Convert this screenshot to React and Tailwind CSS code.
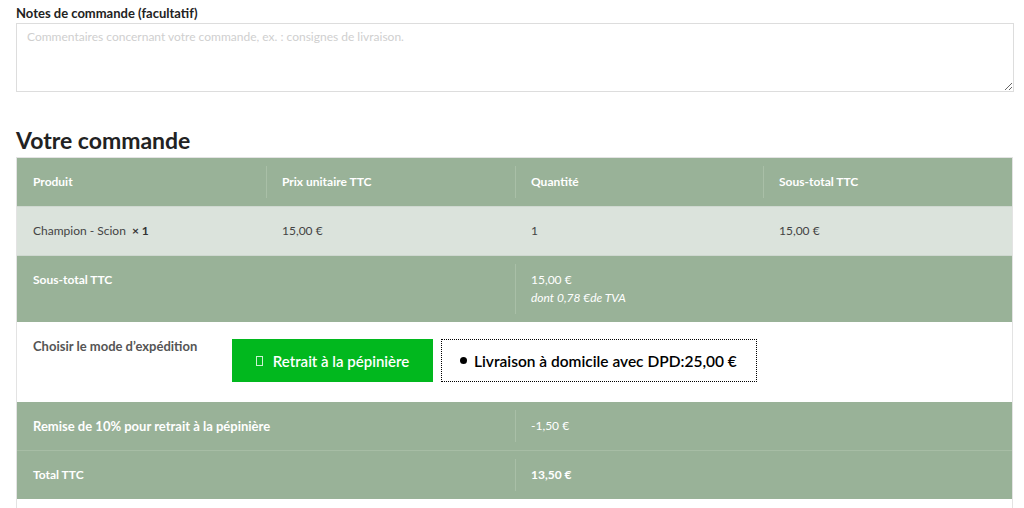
import React from 'react';

const font = { fontFamily: 'Lato, "Noto Sans", sans-serif' };

function Divided({ children, className = '' }) {
  // faint inset divider on the left of a cell
  return (
    <div className={`my-[8px] border-l border-[#a9bfa7] pl-[15px] py-[7px] ${className}`}>
      {children}
    </div>
  );
}

export default function App() {
  return (
    <div className="min-h-screen bg-white px-4 pt-[5px] text-[#333]" style={font}>
      {/* Notes */}
      <label className="block text-[13px] leading-[16px] font-bold text-[#222] mb-[2px]">
        Notes de commande (facultatif)
      </label>
      <textarea
        className="block w-[998px] h-[69px] border border-[#dddddd] px-[10px] py-[4px] text-[12px] leading-[18px] placeholder-[#cfcfcf] outline-none"
        placeholder="Commentaires concernant votre commande, ex. : consignes de livraison."
      />

      <h3 className="mt-[34px] mb-[3px] text-[23px] leading-[28px] font-bold text-[#222]">Votre commande</h3>

      <div className="w-[997px] border-x border-t border-[#e3e3e3] pb-[12px]">
        <table className="w-full border-collapse text-[12px] leading-[18px] table-fixed">
          <thead>
            <tr className="bg-[#99b298] text-white font-bold">
              <th className="w-[249px] text-left font-bold px-4 py-[15px]">Produit</th>
              <th className="w-[249px] text-left font-bold p-0">
                <Divided>Prix unitaire TTC</Divided>
              </th>
              <th className="w-[248px] text-left font-bold p-0">
                <Divided>Quantité</Divided>
              </th>
              <th className="text-left font-bold p-0">
                <Divided>Sous-total TTC</Divided>
              </th>
            </tr>
          </thead>
          <tbody>
            <tr className="bg-[#dbe3dc] text-[#444] border-t border-[#cfd8d0]">
              <td className="px-4 py-[15px]">
                Champion - Scion&nbsp;&nbsp;<strong className="font-bold text-[#333]">× 1</strong>
              </td>
              <td className="px-4 py-[15px]">15,00 €</td>
              <td className="px-4 py-[15px]">1</td>
              <td className="px-4 py-[15px]">15,00 €</td>
            </tr>
          </tbody>
          <tfoot>
            <tr className="bg-[#99b298] text-white border-t border-[#cfd8d0]">
              <th colSpan={2} className="text-left font-bold px-4 pt-[15px] pb-[14px] align-top">
                Sous-total TTC
              </th>
              <td colSpan={2} className="p-0 align-top">
                <Divided className="py-[7px]">
                  <div>15,00 €</div>
                  <div className="italic">dont 0,78 €de TVA</div>
                </Divided>
              </td>
            </tr>
            <tr className="bg-white">
              <td colSpan={4} className="p-0">
                <div className="flex items-start pl-4 pt-[15px] pb-[20px]">
                  <div className="w-[199px] text-[13px] font-bold text-[#555] leading-[18px]">
                    Choisir le mode d’expédition
                  </div>
                  <div className="flex gap-[8px] mt-[2px]">
                    <button className="h-[43px] w-[201px] bg-[#01b81e] text-white text-[15px] font-semibold flex items-center justify-center gap-[10px]">
                      <span className="inline-block w-[7px] h-[10px] border border-white/80" />
                      Retrait à la pépinière
                    </button>
                    <button className="h-[43px] w-[316px] border border-dotted border-black text-black text-[15.5px] font-semibold flex items-center pl-[18px] gap-[7px]">
                      <span className="inline-block w-[7px] h-[7px] rounded-full bg-black" />
                      Livraison à domicile avec DPD:25,00 €
                    </button>
                  </div>
                </div>
              </td>
            </tr>
            <tr className="bg-[#99b298] text-white">
              <th colSpan={2} className="text-left text-[13px] font-bold px-4 py-[15px]">
                Remise de 10% pour retrait à la pépinière
              </th>
              <td colSpan={2} className="p-0">
                <Divided>-1,50 €</Divided>
              </td>
            </tr>
            <tr className="bg-[#99b298] text-white border-t border-[#a7bda5]">
              <th colSpan={2} className="text-left font-bold px-4 pt-[14px] pb-[15px]">
                Total TTC
              </th>
              <td colSpan={2} className="p-0">
                <Divided className="font-bold py-[7px]">13,50 €</Divided>
              </td>
            </tr>
          </tfoot>
        </table>
      </div>
    </div>
  );
}
